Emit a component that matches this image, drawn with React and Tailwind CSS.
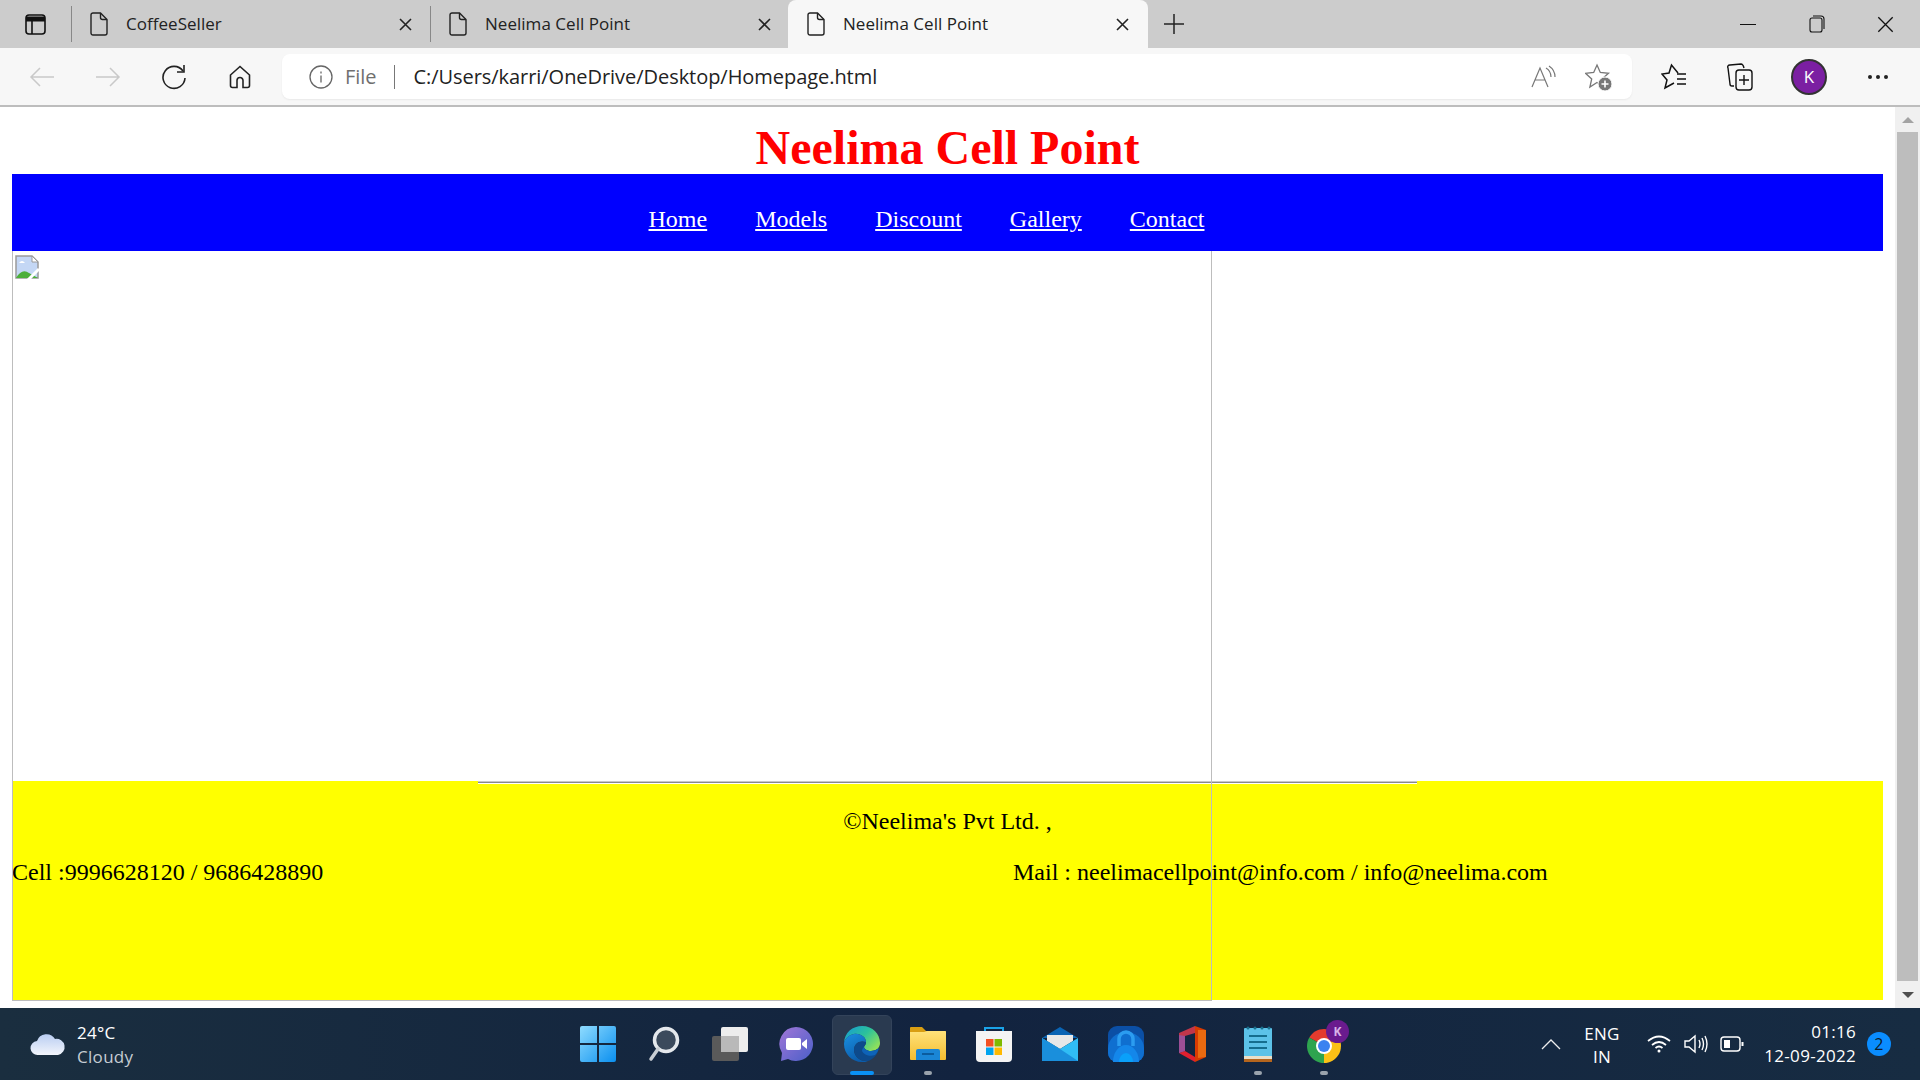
const uiFont = { fontFamily: '"Open Sans", "Noto Sans", sans-serif' };

const FileIcon = () => (
  <svg width="18" height="24" viewBox="0 0 18 24" fill="none" stroke="#222" strokeWidth="1.4" className="shrink-0">
    <path d="M3 1h7.500L17 7.500V21a2 2 0 0 1-2 2H3a2 2 0 0 1-2-2V3a2 2 0 0 1 2-2z" />
    <path d="M10.500 1v4.500a2 2 0 0 0 2 2H17" />
  </svg>
);

const CloseIcon = ({ size = 13, width = 1.6, color = "#222" }) => (
  <svg width={size} height={size} viewBox="0 0 13 13" stroke={color} strokeWidth={width} className="shrink-0">
    <path d="M1 1l11 11M12 1L1 12" />
  </svg>
);

const Tab = ({ title, active, narrow }) => (
  <div
    className={`flex items-center h-12 text-[17px] tracking-[0.03px] text-[#222] ${
      active
        ? "w-[360px] pl-[19px] pr-[19px] bg-[#f7f7f7] rounded-t-lg"
        : narrow
        ? "w-[357px] pl-[18px] pr-[17px]"
        : "w-[358px] pl-[18px] pr-[18px]"
    }`}
  >
    <FileIcon />
    <span className="ml-[18px] flex-1">{title}</span>
    <CloseIcon />
  </div>
);

const Sep = () => <div className="w-px h-9 bg-[#888] shrink-0" />;

const TabBar = () => (
  <div className="h-12 bg-[#cccccc] flex items-end shrink-0">
    <div className="w-[71px] h-12 flex items-center pl-[25px] shrink-0">
      <svg width="21" height="21" viewBox="0 0 21 21" fill="none" stroke="#111" strokeWidth="1.6">
        <rect x="1" y="1" width="19" height="19" rx="3" />
        <path d="M1 5h19" strokeWidth="5" />
        <path d="M7 5v15" />
      </svg>
    </div>
    <div className="h-12 flex items-center"><Sep /></div>
    <Tab title="CoffeeSeller" />
    <div className="h-12 flex items-center"><Sep /></div>
    <Tab title="Neelima Cell Point" narrow />
    <Tab title="Neelima Cell Point" active />
    <div className="h-12 flex items-center pl-[15px]">
      <svg width="22" height="22" viewBox="0 0 22 22" stroke="#222" strokeWidth="1.5">
        <path d="M11 1v20M1 11h20" />
      </svg>
    </div>
    <div className="flex-1 h-12 flex items-center justify-end pr-[1px]">
      <div className="w-[69px] flex justify-center">
        <div className="w-4 h-px bg-[#111]" />
      </div>
      <div className="w-[69px] flex justify-center">
        <svg width="16" height="18" viewBox="0 0 16 18" fill="none" stroke="#111" strokeWidth="1.1">
          <rect x="1" y="3" width="12" height="14" rx="2" />
          <path d="M4 1h8a3 3 0 0 1 3 3v10" />
        </svg>
      </div>
      <div className="w-[68px] flex justify-center">
        <CloseIcon size={17} width={1} color="#111" />
      </div>
    </div>
  </div>
);

const NavBtn = ({ w, children }) => (
  <div className="flex justify-center shrink-0" style={{ width: w }}>{children}</div>
);

const ToolBar = () => (
  <div className="h-[59px] bg-[#f7f7f7] border-b-2 border-[#bdbdbd] flex items-center shrink-0">
    <div className="w-[9px] shrink-0" />
    <NavBtn w={66}>
      <svg width="26" height="22" viewBox="0 0 26 22" fill="none" stroke="#c9c9c9" strokeWidth="1.5"><path d="M25 11H2M11 2l-9 9 9 9" /></svg>
    </NavBtn>
    <NavBtn w={66}>
      <svg width="26" height="22" viewBox="0 0 26 22" fill="none" stroke="#c9c9c9" strokeWidth="1.5"><path d="M1 11h23M15 2l9 9-9 9" /></svg>
    </NavBtn>
    <NavBtn w={66}>
      <svg width="26" height="26" viewBox="0 0 26 26" fill="none" stroke="#222" strokeWidth="1.6"><path d="M22 7a11 11 0 1 0 2 7" /><path d="M23 1v7h-7" /></svg>
    </NavBtn>
    <NavBtn w={66}>
      <svg width="22" height="24" viewBox="0 0 22 24" fill="none" stroke="#222" strokeWidth="1.6"><path d="M11 1.500L1.500 10v10.500a2 2 0 0 0 2 2H8v-7a3 3 0 0 1 6 0v7h4.500a2 2 0 0 0 2-2V10z" /></svg>
    </NavBtn>
    <div className="w-[9px] shrink-0" />
    <div className="w-[1350px] h-[45px] bg-white rounded-lg flex items-center shrink-0 pl-[27px] pr-[19px] text-[20px] shadow-[0_1px_2px_rgba(0,0,0,0.06)]">
      <svg width="24" height="24" viewBox="0 0 24 24" fill="none" stroke="#666" strokeWidth="1.3" className="shrink-0">
        <circle cx="12" cy="12" r="11" />
        <path d="M12 10.500v7M12 6.500v2" />
      </svg>
      <span className="ml-[12px] text-[#6f6f6f] tracking-[-0.05px]">File</span>
      <div className="ml-[18px] w-px h-6 bg-[#777]" />
      <span className="ml-[18px] flex-1 text-[#222] tracking-[-0.05px]">C:/Users/karri/OneDrive/Desktop/Homepage.html</span>
      <svg width="26" height="26" viewBox="0 0 26 26" fill="none" stroke="#777" strokeWidth="1.2" className="shrink-0">
        <path d="M1 23L9 4l8 19M4 16h10" />
        <path d="M15 4q5 3 5 9M18 2q6 4 6 11" />
      </svg>
      <svg width="28" height="28" viewBox="0 0 28 28" fill="none" stroke="#777" strokeWidth="1.3" className="ml-[28px] shrink-0">
        <path d="M12 2l3.300 7.500 8.200.8-6.200 5.500 1.800 8L12 19.500 4.900 24l1.800-8L.5 10.300l8.200-.8z" />
        <circle cx="20" cy="21" r="7" fill="#777" stroke="#fff" strokeWidth="1" />
        <path d="M20 17.500v7M16.500 21h7" stroke="#fff" strokeWidth="1.6" />
      </svg>
    </div>
    <NavBtn w={76}>
      <svg width="26" height="28" viewBox="0 0 26 28" fill="none" stroke="#111" strokeWidth="1.5" className="ml-[8px]">
        <path d="M17 10L10.500 2 8 10l-7 1 5 6-2 8 9-5" />
        <path d="M16 11h9M16 16h9M16 21h9" />
      </svg>
    </NavBtn>
    <NavBtn w={58}>
      <svg width="26" height="30" viewBox="0 0 26 30" fill="none" stroke="#111" strokeWidth="1.4" className="ml-[6px]">
        <path d="M7 24H5a2 2 0 0 1-2-2L1 6a2 2 0 0 1 2-3l11-1q2 0 3 4" />
        <rect x="9" y="8" width="16" height="20" rx="3" />
        <path d="M17 13v10M12 18h10" />
      </svg>
    </NavBtn>
    <NavBtn w={86}>
      <div className="w-9 h-9 rounded-full bg-[#7b1fa2] border-2 border-[#333] flex items-center justify-center text-white text-[17px] leading-none">K</div>
    </NavBtn>
    <NavBtn w={52}>
      <div className="flex gap-[4px]">
        <div className="w-1 h-1 rounded-full bg-[#222]" />
        <div className="w-1 h-1 rounded-full bg-[#222]" />
        <div className="w-1 h-1 rounded-full bg-[#222]" />
      </div>
    </NavBtn>
  </div>
);

const BrokenImage = () => (
  <svg width="24" height="24" viewBox="0 0 24 24">
    <path d="M1 1h16l6 6v16H1z" fill="#c4d7f5" stroke="#9a9a9a" strokeWidth="1.500" />
    <path d="M17 1v6h6z" fill="#fff" stroke="#9a9a9a" />
    <path d="M1 23q6-10 13-5l9 5z" fill="#4caf3a" />
    <path d="M4 8q3-4 6 0z" fill="#fff" />
    <path d="M13 25l11-11" stroke="#fff" strokeWidth="3" />
  </svg>
);

const links = ["Home", "Models", "Discount", "Gallery", "Contact"];

const Page = () => (
  <div className="relative flex-1 bg-white pl-3 pr-3 overflow-hidden" style={{ fontFamily: '"Liberation Serif", serif' }}>
    <h1 className="h-[67px] flex items-center justify-center text-[48px] font-bold text-[#ff0000] leading-none pt-[14px]">
      Neelima Cell Point
    </h1>
    <nav className="h-[77px] bg-[#0000ff] flex items-center justify-center gap-12 pr-[42px] pt-[12px] text-[24px] text-white">
      {links.map((l) => (
        <a key={l} href="#" className="underline">{l}</a>
      ))}
    </nav>
    <div className="h-[530px]" />
    <footer className="h-[219px] bg-[#ffff00] text-[24px] text-black">
      <div className="w-[939px] h-[3px] mx-auto bg-[#8a8a8a] border-t border-b border-t-[#c8c8c8] border-b-white" />
      <p className="text-center mt-[23px] leading-[28px]">©Neelima's Pvt Ltd. ,</p>
      <div className="flex mt-[23px] leading-[28px]">
        <span className="w-[1001px]">Cell :9996628120 / 9686428890</span>
        <span>Mail : neelimacellpoint@info.com / info@neelima.com</span>
      </div>
    </footer>
    {/* iframe sits on top of the blank area and footer */}
    <div className="absolute left-3 top-[144px] w-[1200px] h-[750px] border-l border-r border-b border-[#bdbdbd] pl-[2px] pt-[4px]">
      <BrokenImage />
    </div>
  </div>
);

const ScrollBar = () => (
  <div className="w-[25px] bg-[#f0f0f0] flex flex-col items-center shrink-0">
    <div className="h-[25px] flex items-center justify-center">
      <div className="w-0 h-0 border-l-[6px] border-r-[6px] border-b-[6px] border-l-transparent border-r-transparent border-b-[#a3a3a3]" />
    </div>
    <div className="w-[21px] flex-1 bg-[#bdbdbd]" />
    <div className="h-[27px] flex items-center justify-center">
      <div className="w-0 h-0 border-l-[6px] border-r-[6px] border-t-[6px] border-l-transparent border-r-transparent border-t-[#4f4f4f]" />
    </div>
  </div>
);

const Dock = ({ children, active, dot }) => (
  <div className="relative w-[66px] h-[72px] flex items-center justify-center">
    {active && <div className="absolute left-[3px] top-[7px] w-[60px] h-[60px] rounded-md bg-[#2a3a50] border border-[#33435a]" />}
    <div className="relative flex items-center justify-center">{children}</div>
    {active && <div className="absolute left-[21px] top-[63px] w-6 h-1 rounded-full bg-[#0a91f5]" />}
    {dot && <div className="absolute left-[29px] top-[63px] w-2 h-1 rounded-full bg-[#9aa3ad]" />}
  </div>
);

const StartIcon = () => (
  <svg width="36" height="36" viewBox="0 0 36 36">
    <defs>
      <linearGradient id="st" x1="0" y1="0" x2="1" y2="1">
        <stop offset="0" stopColor="#8fdcff" />
        <stop offset="1" stopColor="#0a8fef" />
      </linearGradient>
    </defs>
    <path d="M2 0h15v17H0V2a2 2 0 0 1 2-2zM19 0h15a2 2 0 0 1 2 2v15H19zM0 19h17v17H2a2 2 0 0 1-2-2zM19 19h17v15a2 2 0 0 1-2 2H19z" fill="url(#st)" />
  </svg>
);

const SearchIcon = () => (
  <svg width="32" height="36" viewBox="0 0 32 36" fill="none">
    <circle cx="18" cy="14" r="11.500" stroke="#e4e8ec" strokeWidth="3.500" fill="#3b4a5c" />
    <path d="M10 23L3 33" stroke="#c9ced4" strokeWidth="3.500" strokeLinecap="round" />
  </svg>
);

const TaskViewIcon = () => (
  <svg width="36" height="34" viewBox="0 0 36 34">
    <rect x="9" y="0" width="27" height="25" rx="2" fill="#ededed" />
    <rect x="0" y="9" width="27" height="25" rx="2" fill="#5a5a5a" />
    <rect x="9" y="9" width="18" height="16" fill="#b9b9b9" />
  </svg>
);

const ChatIcon = () => (
  <svg width="34" height="34" viewBox="0 0 34 34">
    <defs>
      <linearGradient id="ch" x1="0" y1="0" x2="1" y2="1">
        <stop offset="0" stopColor="#a176d8" />
        <stop offset="1" stopColor="#4a5fc8" />
      </linearGradient>
    </defs>
    <path d="M17 0a17 17 0 1 1-8 32l-7 2 1-8A17 17 0 0 1 17 0z" fill="url(#ch)" />
    <rect x="7" y="11" width="15" height="12" rx="2" fill="#fff" />
    <path d="M23 16l5-4v10l-5-4z" fill="#fff" />
  </svg>
);

const EdgeIcon = () => (
  <svg width="36" height="36" viewBox="0 0 36 36">
    <defs>
      <linearGradient id="ed1" x1="0" y1="0" x2="1" y2="0.7">
        <stop offset="0" stopColor="#1497d8" />
        <stop offset="0.55" stopColor="#2cc29a" />
        <stop offset="1" stopColor="#8ee05c" />
      </linearGradient>
      <linearGradient id="ed2" x1="0" y1="0" x2="0.5" y2="1">
        <stop offset="0" stopColor="#1a8fe0" />
        <stop offset="1" stopColor="#0b5cab" />
      </linearGradient>
    </defs>
    {/* green-blue cap */}
    <path d="M0 18C0 6 9 0 18 0c11 0 18 8 18 17 0 5-4 8-9 8-4 0-7-2-7-4 0-1 2-2 2-5 0-5-6-9-12-8C5 9 0 13 0 18z" fill="url(#ed1)" />
    {/* blue body */}
    <path d="M0 18c0-5 5-9 10-10 6-1 12 3 12 8-6-2-12 1-12 8 0 6 6 12 14 11-2 1-4 1-6 1C8 36 0 28 0 18z" fill="url(#ed2)" />
    {/* dark lower wave */}
    <path d="M10 24c0-7 6-10 12-8 0 3-2 4-2 5 0 2 3 4 7 4 3 0 6-1 8-3-1 7-7 12-11 13-8 1-14-5-14-11z" fill="#0d4a8c" />
    <path d="M20 21c0 2 3 4 7 4 3 0 6-1 8-3-1 3-2 5-4 7-5 2-11 0-13-4 0-2 1-3 2-4z" fill="#0e63b8" />
  </svg>
);

const FolderIcon = () => (
  <svg width="36" height="34" viewBox="0 0 36 34">
    <defs>
      <linearGradient id="fo" x1="0" y1="0" x2="0" y2="1">
        <stop offset="0" stopColor="#ffe27a" />
        <stop offset="1" stopColor="#f5bd2f" />
      </linearGradient>
    </defs>
    <path d="M1 0h11l4 4h19a1 1 0 0 1 1 1v5H0V1a1 1 0 0 1 1-1z" fill="#d99e12" />
    <path d="M0 5h14l3-1h18a1 1 0 0 1 1 1v27a1 1 0 0 1-1 1H1a1 1 0 0 1-1-1z" fill="url(#fo)" />
    <path d="M6 33V24a2 2 0 0 1 2-2h20a2 2 0 0 1 2 2v9z" fill="#1a86d6" />
    <rect x="12" y="26" width="12" height="2" fill="#0b5c9e" />
  </svg>
);

const StoreIcon = () => (
  <svg width="36" height="36" viewBox="0 0 36 36">
    <path d="M9 7V2h18v5" fill="none" stroke="#1aa3e8" strokeWidth="2" />
    <path d="M0 5h36v27a4 4 0 0 1-4 4H4a4 4 0 0 1-4-4z" fill="#f4f4f4" />
    <rect x="10" y="13" width="7.500" height="7.500" fill="#f25022" />
    <rect x="18.500" y="13" width="7.500" height="7.500" fill="#7fba00" />
    <rect x="10" y="21.500" width="7.500" height="7.500" fill="#00a4ef" />
    <rect x="18.500" y="21.500" width="7.500" height="7.500" fill="#ffb900" />
  </svg>
);

const MailIcon = () => (
  <svg width="36" height="34" viewBox="0 0 36 34">
    <path d="M18 0l18 11H0z" fill="#0a64b4" />
    <path d="M5 8h26v6L18 22 5 14z" fill="#e8e8e8" />
    <path d="M0 11l18 11 18-11v23H0z" fill="#30bdf5" />
    <path d="M0 34V11l18 11 18 12z" fill="#1a8fdc" />
  </svg>
);

const LockIcon = () => (
  <svg width="36" height="36" viewBox="0 0 36 36">
    <rect width="36" height="36" rx="9" fill="#0b4fa5" />
    <path d="M0 22a18 16 0 0 1 36 0v5a9 9 0 0 1-9 9H9a9 9 0 0 1-9-9z" fill="#0f6fd0" />
    <path d="M11 20v-7a7 7 0 0 1 14 0v7" fill="none" stroke="#2b9cf0" strokeWidth="3.500" />
    <path d="M5 36a13 17 0 0 1 26 0z" fill="#1487ea" />
    <path d="M11 36a7 9 0 0 1 14 0z" fill="#0aa0fa" />
  </svg>
);

const OfficeIcon = () => (
  <svg width="28" height="36" viewBox="0 0 28 36">
    <path d="M17 0l11 4v27l-11 5z" fill="#d83b01" />
    <path d="M17 0L1 7v20l6-2V10l10-3z" fill="#c2364a" />
    <path d="M1 27l16 9 0-5-10-6z" fill="#e0202f" />
    <path d="M20 4l8 0v27l-8 1z" fill="#ea6a10" />
    <path d="M1 9l6 1v15l-6 2z" fill="#9b4f96" />
  </svg>
);

const NotepadIcon = () => (
  <svg width="28" height="36" viewBox="0 0 28 36">
    <rect x="0" y="2" width="28" height="34" rx="1" fill="#5cc2e8" />
    <rect x="0" y="30" width="28" height="3" fill="#eadfc8" />
    <rect x="0" y="33" width="28" height="3" fill="#b5651d" />
    <circle cx="4" cy="2" r="1.500" fill="#1a6f8c" />
    <circle cx="11" cy="2" r="1.500" fill="#1a6f8c" />
    <circle cx="18" cy="2" r="1.500" fill="#1a6f8c" />
    <circle cx="25" cy="2" r="1.500" fill="#1a6f8c" />
    <path d="M5 10h18M5 16h18M5 22h18" stroke="#156e8e" strokeWidth="2" />
  </svg>
);

const ChromeIcon = () => (
  <div className="relative w-[34px] h-[34px] top-[2px]">
    <svg width="34" height="34" viewBox="0 0 34 34">
      <path d="M17 17L2.300 8.500A17 17 0 0 1 31.700 8.500z" fill="#e33b2e" />
      <path d="M17 17L31.700 8.500A17 17 0 0 1 17 34z" fill="#fbc116" />
      <path d="M17 17L17 34A17 17 0 0 1 2.300 8.500z" fill="#2ea44f" />
      <circle cx="17" cy="17" r="8" fill="#fff" />
      <circle cx="17" cy="17" r="6" fill="#3b82f0" />
    </svg>
    <div className="absolute left-[19px] top-[-9px] w-[23px] h-[23px] rounded-full bg-[#6a1b8e] flex items-center justify-center text-[#d8b4e8] text-[12px] font-bold leading-none">K</div>
  </div>
);

const Taskbar = () => (
  <div className="h-[72px] bg-gradient-to-r from-[#1a2e3f] via-[#12233f] to-[#172c42] flex shrink-0 text-white" style={uiFont}>
    <div className="w-[565px] flex items-center pl-[30px]">
      <svg width="36" height="24" viewBox="0 0 36 24">
        <defs>
          <linearGradient id="cl" x1="0" y1="0" x2="0" y2="1">
            <stop offset="0" stopColor="#b9cdf2" />
            <stop offset="1" stopColor="#f2f5fb" />
          </linearGradient>
        </defs>
        <path d="M8 23a7 7 0 0 1-1-14 10 10 0 0 1 18-2 8 8 0 0 1 3 16z" fill="url(#cl)" />
      </svg>
      <div className="ml-[11px] pt-[2px] flex flex-col text-[17px] leading-[24px] tracking-[0.3px]">
        <span>24°C</span>
        <span className="text-[#c5ccd3]">Cloudy</span>
      </div>
    </div>
    <div className="w-[792px] flex shrink-0">
      <Dock><StartIcon /></Dock>
      <Dock><SearchIcon /></Dock>
      <Dock><TaskViewIcon /></Dock>
      <Dock><ChatIcon /></Dock>
      <Dock active><EdgeIcon /></Dock>
      <Dock dot><FolderIcon /></Dock>
      <Dock><StoreIcon /></Dock>
      <Dock><MailIcon /></Dock>
      <Dock><LockIcon /></Dock>
      <Dock><OfficeIcon /></Dock>
      <Dock dot><NotepadIcon /></Dock>
      <Dock dot><ChromeIcon /></Dock>
    </div>
    <div className="flex-1 flex items-center text-[17px] tracking-[0.3px]">
      <svg width="20" height="12" viewBox="0 0 20 12" fill="none" stroke="#eee" strokeWidth="1.300" className="ml-[184px] shrink-0">
        <path d="M1 11l9-9 9 9" />
      </svg>
      <div className="ml-[21px] pt-[2px] w-[40px] flex flex-col items-center leading-[23px] shrink-0">
        <span>ENG</span>
        <span>IN</span>
      </div>
      <svg width="24" height="18" viewBox="0 0 24 18" fill="none" stroke="#fff" strokeWidth="1.700" className="ml-[25px] shrink-0">
        <path d="M1 6q11-9 22 0M5 10q7-6 14 0M8.500 13q3.500-3 7 0" />
        <circle cx="12" cy="16" r="1.500" fill="#fff" stroke="none" />
      </svg>
      <svg width="24" height="20" viewBox="0 0 24 20" fill="none" stroke="#fff" strokeWidth="1.400" className="ml-[13px] shrink-0">
        <path d="M1 7h4l6-5v16l-6-5H1z" />
        <path d="M15 6q2 4 0 8M18 4q3 6 0 12M21 2q4 8 0 16" />
      </svg>
      <svg width="24" height="16" viewBox="0 0 24 16" fill="none" stroke="#fff" strokeWidth="1.400" className="ml-[12px] shrink-0">
        <rect x="1" y="1" width="19" height="14" rx="3" />
        <rect x="4" y="4" width="6" height="8" fill="#fff" stroke="none" />
        <path d="M22.500 6v4" strokeWidth="2" />
      </svg>
      <div className="ml-[16px] w-[96px] flex flex-col items-end leading-[24px] shrink-0">
        <span>01:16</span>
        <span>12-09-2022</span>
      </div>
      <div className="ml-[11px] w-6 h-6 rounded-full bg-[#0a8dff] flex items-center justify-center text-[#0d1b2a] text-[16px] leading-none shrink-0">2</div>
    </div>
  </div>
);

const App = () => (
  <div className="w-[1920px] h-[1080px] flex flex-col overflow-hidden">
    <div style={uiFont} className="shrink-0 flex flex-col">
      <TabBar />
      <ToolBar />
    </div>
    <div className="flex-1 flex min-h-0">
      <Page />
      <ScrollBar />
    </div>
    <Taskbar />
  </div>
);

export default App;
